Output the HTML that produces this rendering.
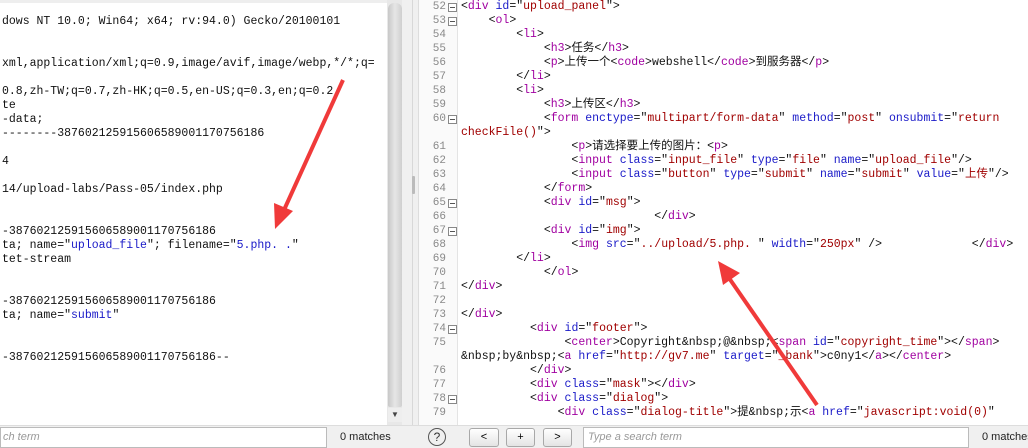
<!DOCTYPE html>
<html><head><meta charset="utf-8"><style>
*{margin:0;padding:0;box-sizing:border-box}
body{width:1028px;height:448px;overflow:hidden;background:#f0f0f0;position:relative;font-family:"Liberation Mono","Noto Sans CJK SC",monospace}
.l{position:absolute;white-space:pre;font-size:11.5px;line-height:14px;height:14px;color:#111}
.t{color:#a000a0}.a{color:#1a1ac8}.v{color:#a00000}.b{color:#1a1ac8}
.n{position:absolute;left:418px;width:28px;text-align:right;font-size:11px;line-height:14px;color:#888}
.f{position:absolute;left:448px;width:9px;height:9px;border:1px solid #888;background:#fff}
.f:after{content:"";position:absolute;left:1px;top:3px;width:5px;height:1px;background:#555}
.ui{font-family:"Liberation Sans",sans-serif}
.btn{position:absolute;top:428px;height:19px;border:1px solid #a8a8a8;border-radius:3px;background:linear-gradient(#fff,#e4e4e4);font-family:"Liberation Sans",sans-serif;font-size:11px;text-align:center;line-height:17px}
</style></head><body>
<!-- left panel -->
<div style="position:absolute;left:0;top:0;width:387px;height:425px;background:#fff;border-top:3px solid #eee"></div>
<div style="position:absolute;left:387px;top:0;width:15px;height:425px;background:#e8e8e8"></div>
<div style="position:absolute;left:388px;top:3px;width:14px;height:404px;border-radius:6px 6px 2px 2px;background:linear-gradient(90deg,#c8c8c8,#e6e6e6 50%,#cfcfcf)"></div>
<div style="position:absolute;left:388px;top:408px;width:14px;height:14px;background:#eee;font-size:8px;color:#444;text-align:center;line-height:14px" class="ui">▼</div>
<div style="position:absolute;left:402px;top:0;width:16px;height:448px;background:#f0f0f0"></div>
<div style="position:absolute;left:412px;top:0;width:1px;height:448px;background:#d8d8d8"></div>
<div style="position:absolute;left:412px;top:176px;width:3px;height:18px;background:#bbb;border-radius:1px"></div>

<div class="l" style="left:2px;top:15px">dows NT 10.0; Win64; x64; rv:94.0) Gecko/20100101</div>
<div class="l" style="left:2px;top:57px">xml,application/xml;q=0.9,image/avif,image/webp,*/*;q=</div>
<div class="l" style="left:2px;top:85px">0.8,zh-TW;q=0.7,zh-HK;q=0.5,en-US;q=0.3,en;q=0.2</div>
<div class="l" style="left:2px;top:99px">te</div>
<div class="l" style="left:2px;top:113px">-data;</div>
<div class="l" style="left:2px;top:127px">--------387602125915606589001170756186</div>
<div class="l" style="left:2px;top:155px">4</div>
<div class="l" style="left:2px;top:183px">14/upload-labs/Pass-05/index.php</div>
<div class="l" style="left:2px;top:225px">-387602125915606589001170756186</div>
<div class="l" style="left:2px;top:239px">ta; name="<span class="b">upload_file</span>"; filename="<span class="b">5.php. .</span>"</div>
<div class="l" style="left:2px;top:253px">tet-stream</div>
<div class="l" style="left:2px;top:295px">-387602125915606589001170756186</div>
<div class="l" style="left:2px;top:309px">ta; name="<span class="b">submit</span>"</div>
<div class="l" style="left:2px;top:351px">-387602125915606589001170756186--</div>

<!-- right panel -->
<div style="position:absolute;left:418px;top:0;width:610px;height:425px;background:#fff"></div>
<div style="position:absolute;left:418px;top:0;width:40px;height:425px;background:#fafafa;border-left:1px solid #ddd;border-right:1px solid #e4e4e4"></div>

<div class="n" style="top:0">52</div><div class="f" style="top:3px"></div>
<div class="n" style="top:14px">53</div><div class="f" style="top:17px"></div>
<div class="n" style="top:28px">54</div><div class="n" style="top:42px">55</div><div class="n" style="top:56px">56</div><div class="n" style="top:70px">57</div><div class="n" style="top:84px">58</div><div class="n" style="top:98px">59</div>
<div class="n" style="top:112px">60</div><div class="f" style="top:115px"></div>
<div class="n" style="top:140px">61</div><div class="n" style="top:154px">62</div><div class="n" style="top:168px">63</div><div class="n" style="top:182px">64</div>
<div class="n" style="top:196px">65</div><div class="f" style="top:199px"></div>
<div class="n" style="top:210px">66</div>
<div class="n" style="top:224px">67</div><div class="f" style="top:227px"></div>
<div class="n" style="top:238px">68</div><div class="n" style="top:252px">69</div><div class="n" style="top:266px">70</div><div class="n" style="top:280px">71</div><div class="n" style="top:294px">72</div><div class="n" style="top:308px">73</div>
<div class="n" style="top:322px">74</div><div class="f" style="top:325px"></div>
<div class="n" style="top:336px">75</div><div class="n" style="top:364px">76</div><div class="n" style="top:378px">77</div>
<div class="n" style="top:392px">78</div><div class="f" style="top:395px"></div>
<div class="n" style="top:406px">79</div>

<div class="l" style="left:461px;top:0">&lt;<span class="t">div</span> <span class="a">id</span>="<span class="v">upload_panel</span>"&gt;</div>
<div class="l" style="left:461px;top:14px">    &lt;<span class="t">ol</span>&gt;</div>
<div class="l" style="left:461px;top:28px">        &lt;<span class="t">li</span>&gt;</div>
<div class="l" style="left:461px;top:42px">            &lt;<span class="t">h3</span>&gt;任务&lt;/<span class="t">h3</span>&gt;</div>
<div class="l" style="left:461px;top:56px">            &lt;<span class="t">p</span>&gt;上传一个&lt;<span class="t">code</span>&gt;webshell&lt;/<span class="t">code</span>&gt;到服务器&lt;/<span class="t">p</span>&gt;</div>
<div class="l" style="left:461px;top:70px">        &lt;/<span class="t">li</span>&gt;</div>
<div class="l" style="left:461px;top:84px">        &lt;<span class="t">li</span>&gt;</div>
<div class="l" style="left:461px;top:98px">            &lt;<span class="t">h3</span>&gt;上传区&lt;/<span class="t">h3</span>&gt;</div>
<div class="l" style="left:461px;top:112px">            &lt;<span class="t">form</span> <span class="a">enctype</span>="<span class="v">multipart/form-data</span>" <span class="a">method</span>="<span class="v">post</span>" <span class="a">onsubmit</span>="<span class="v">return</span></div>
<div class="l" style="left:461px;top:126px"><span class="v">checkFile()</span>"&gt;</div>
<div class="l" style="left:461px;top:140px">                &lt;<span class="t">p</span>&gt;请选择要上传的图片：&lt;<span class="t">p</span>&gt;</div>
<div class="l" style="left:461px;top:154px">                &lt;<span class="t">input</span> <span class="a">class</span>="<span class="v">input_file</span>" <span class="a">type</span>="<span class="v">file</span>" <span class="a">name</span>="<span class="v">upload_file</span>"/&gt;</div>
<div class="l" style="left:461px;top:168px">                &lt;<span class="t">input</span> <span class="a">class</span>="<span class="v">button</span>" <span class="a">type</span>="<span class="v">submit</span>" <span class="a">name</span>="<span class="v">submit</span>" <span class="a">value</span>="<span class="v">上传</span>"/&gt;</div>
<div class="l" style="left:461px;top:182px">            &lt;/<span class="t">form</span>&gt;</div>
<div class="l" style="left:461px;top:196px">            &lt;<span class="t">div</span> <span class="a">id</span>="<span class="v">msg</span>"&gt;</div>
<div class="l" style="left:461px;top:210px">                            &lt;/<span class="t">div</span>&gt;</div>
<div class="l" style="left:461px;top:224px">            &lt;<span class="t">div</span> <span class="a">id</span>="<span class="v">img</span>"&gt;</div>
<div class="l" style="left:461px;top:238px">                &lt;<span class="t">img</span> <span class="a">src</span>="<span class="v">../upload/5.php. </span>" <span class="a">width</span>="<span class="v">250px</span>" /&gt;             &lt;/<span class="t">div</span>&gt;</div>
<div class="l" style="left:461px;top:252px">        &lt;/<span class="t">li</span>&gt;</div>
<div class="l" style="left:461px;top:266px">            &lt;/<span class="t">ol</span>&gt;</div>
<div class="l" style="left:461px;top:280px">&lt;/<span class="t">div</span>&gt;</div>
<div class="l" style="left:461px;top:308px">&lt;/<span class="t">div</span>&gt;</div>
<div class="l" style="left:461px;top:322px">          &lt;<span class="t">div</span> <span class="a">id</span>="<span class="v">footer</span>"&gt;</div>
<div class="l" style="left:461px;top:336px">               &lt;<span class="t">center</span>&gt;Copyright&amp;nbsp;@&amp;nbsp;&lt;<span class="t">span</span> <span class="a">id</span>="<span class="v">copyright_time</span>"&gt;&lt;/<span class="t">span</span>&gt;</div>
<div class="l" style="left:461px;top:350px">&amp;nbsp;by&amp;nbsp;&lt;<span class="t">a</span> <span class="a">href</span>="<span class="v">http://gv7.me</span>" <span class="a">target</span>="<span class="v">_bank</span>"&gt;c0ny1&lt;/<span class="t">a</span>&gt;&lt;/<span class="t">center</span>&gt;</div>
<div class="l" style="left:461px;top:364px">          &lt;/<span class="t">div</span>&gt;</div>
<div class="l" style="left:461px;top:378px">          &lt;<span class="t">div</span> <span class="a">class</span>="<span class="v">mask</span>"&gt;&lt;/<span class="t">div</span>&gt;</div>
<div class="l" style="left:461px;top:392px">          &lt;<span class="t">div</span> <span class="a">class</span>="<span class="v">dialog</span>"&gt;</div>
<div class="l" style="left:461px;top:406px">              &lt;<span class="t">div</span> <span class="a">class</span>="<span class="v">dialog-title</span>"&gt;提&amp;nbsp;示&lt;<span class="t">a</span> <span class="a">href</span>="<span class="v">javascript:void(0)</span>"</div>

<!-- arrows -->
<svg style="position:absolute;left:0;top:0" width="1028" height="448">
<line x1="343" y1="80" x2="284" y2="210" stroke="#f03a3a" stroke-width="4"/>
<polygon points="275,229 274,203 293,211" fill="#f03a3a"/>
<line x1="817" y1="405" x2="729" y2="278" stroke="#f03a3a" stroke-width="4"/>
<polygon points="718,261 740,273 723,285" fill="#f03a3a"/>
</svg>

<!-- bottom bar -->
<div style="position:absolute;left:0;top:425px;width:1028px;height:23px;background:#f0f0f0;border-top:1px solid #ddd"></div>
<div style="position:absolute;left:0;top:427px;width:327px;height:21px;background:#fff;border:1px solid #bbb;font-family:'Liberation Sans',sans-serif;font-style:italic;font-size:11px;color:#999;line-height:19px;padding-left:2px">ch term</div>
<div class="ui" style="position:absolute;left:340px;top:431px;font-size:11px;color:#222">0 matches</div>
<div style="position:absolute;left:428px;top:428px;width:18px;height:18px;border:1px solid #555;border-radius:50%;font-family:'Liberation Sans',sans-serif;font-size:12px;text-align:center;line-height:16px;color:#333">?</div>
<div class="btn" style="left:469px;width:30px">&lt;</div>
<div class="btn" style="left:506px;width:29px">+</div>
<div class="btn" style="left:543px;width:29px">&gt;</div>
<div style="position:absolute;left:583px;top:427px;width:386px;height:21px;background:#fff;border:1px solid #bbb;font-family:'Liberation Sans',sans-serif;font-style:italic;font-size:11px;color:#999;line-height:19px;padding-left:4px">Type a search term</div>
<div class="ui" style="position:absolute;left:982px;top:431px;font-size:11px;color:#222;white-space:nowrap">0 matches</div>
</body></html>
